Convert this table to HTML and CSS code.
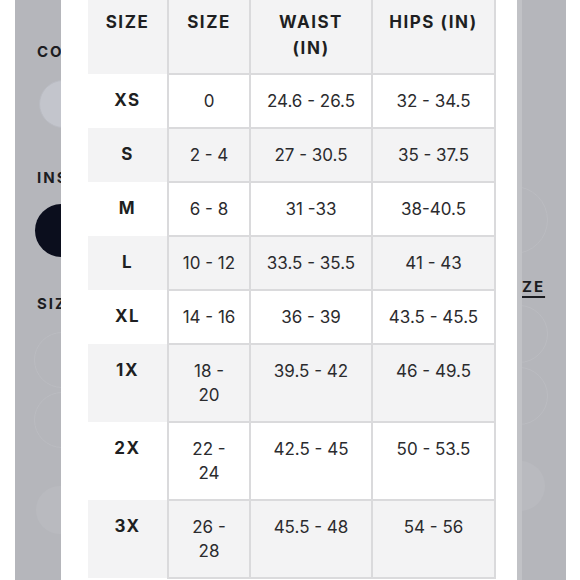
FILE: index.html
```html
<!DOCTYPE html>
<html lang="en">
<head>
<meta charset="utf-8">
<title>Size chart</title>
<link rel="stylesheet" href="styles.css">
</head>
<body>
<div class="frame">
  <div class="backdrop left">
    <div class="bg-label first">CO</div>
    <div class="swatch light"></div>
    <div class="bg-label after-swatch">INS</div>
    <div class="swatch dark"></div>
    <div class="bg-label after-dark">SIZ</div>
    <div class="ghost ring r1"></div>
    <div class="ghost ring r2"></div>
    <div class="ghost fill f1"></div>
  </div>

  <div class="modal">
    <table class="size-table">
      <colgroup>
        <col class="c1"><col class="c2"><col class="c3"><col class="c4">
      </colgroup>
      <thead>
        <tr>
          <th class="label">SIZE</th>
          <th>SIZE</th>
          <th>WAIST (IN)</th>
          <th>HIPS (IN)</th>
        </tr>
      </thead>
      <tbody>
        <tr><th class="label">XS</th><td>0</td><td>24.6 - 26.5</td><td>32 - 34.5</td></tr>
        <tr><th class="label">S</th><td>2 - 4</td><td>27 - 30.5</td><td>35 - 37.5</td></tr>
        <tr><th class="label">M</th><td>6 - 8</td><td>31 -33</td><td>38-40.5</td></tr>
        <tr><th class="label">L</th><td>10 - 12</td><td>33.5 - 35.5</td><td>41 - 43</td></tr>
        <tr><th class="label">XL</th><td>14 - 16</td><td>36 - 39</td><td>43.5 - 45.5</td></tr>
        <tr><th class="label">1X</th><td>18 -<br>20</td><td>39.5 - 42</td><td>46 - 49.5</td></tr>
        <tr><th class="label">2X</th><td>22 -<br>24</td><td>42.5 - 45</td><td>50 - 53.5</td></tr>
        <tr><th class="label">3X</th><td>26 -<br>28</td><td>45.5 - 48</td><td>54 - 56</td></tr>
      </tbody>
    </table>
  </div>

  <div class="backdrop right">
    <div class="ghost ring rr1"></div>
    <div class="bg-label link">ZE</div>
    <div class="ghost ring rr2"></div>
    <div class="ghost ring rr3"></div>
    <div class="ghost fill rf1"></div>
  </div>
</div>
</body>
</html>
```
FILE: styles.css
```css
* { box-sizing: border-box; }

html, body {
  margin: 0;
  padding: 0;
  background: #ffffff;
}

body {
  font-family: Inter, "Noto Sans", "Liberation Sans", sans-serif;
}

.frame {
  display: flex;
  width: 580px;
  height: 580px;
  padding: 0 14px 0 15px;
  overflow: hidden;
  background: #ffffff;
}

/* ---------- dimmed page behind the modal ---------- */
.backdrop {
  display: flex;
  flex-direction: column;
  height: 580px;
  overflow: hidden;
  background: #b5b6bb;
}

.backdrop.left {
  width: 46px;
  padding-left: 21px;
}

.backdrop.right {
  width: 49px;
  border-left: 5px solid #c1c2c6;
}

.bg-label {
  flex: none;
  font-size: 15px;
  line-height: 20px;
  font-weight: 700;
  letter-spacing: 2px;
  color: #1c1d22;
  white-space: nowrap;
  padding-left: 1px;
}

.bg-label.first { margin-top: 42px; }
.bg-label.after-swatch { margin-top: 40px; }
.bg-label.after-dark { margin-top: 37px; }

.swatch {
  flex: none;
  border-radius: 50%;
}

.swatch.light {
  width: 48px;
  height: 48px;
  margin-top: 18px;
  margin-left: 3px;
  background: #c3c5cc;
  border: 1px solid #b9bbc2;
}

.swatch.dark {
  width: 53px;
  height: 53px;
  margin-top: 16px;
  margin-left: -1px;
  background: #0b0e1d;
}

.ghost {
  flex: none;
  border-radius: 50%;
}

.ghost.ring {
  border: 1.5px solid #bbbcc1;
}

.ghost.fill {
  background: #b9babf;
}

.r1 { width: 56px; height: 56px; margin-top: 18px; margin-left: -2px; }
.r2 { width: 56px; height: 56px; margin-top: 4px; margin-left: -2px; }
.f1 { width: 48px; height: 48px; margin-top: 38px; margin-left: 0; }

.link {
  margin-top: 23px;
  text-decoration: underline;
  text-decoration-thickness: 2px;
  text-underline-offset: 4px;
  padding-left: 0;
}

.rr1 { width: 68px; height: 68px; margin-top: 186px; margin-left: -42px; }
.rr2 { width: 58px; height: 58px; margin-top: 8px; margin-left: -32px; }
.rr3 { width: 58px; height: 58px; margin-top: 4px; margin-left: -32px; }
.rf1 { width: 50px; height: 50px; margin-top: 36px; margin-left: -27px; }

/* ---------- modal ---------- */
.modal {
  width: 456px;
  height: 580px;
  background: #ffffff;
  padding-left: 27px;
  overflow: hidden;
}

.size-table {
  width: 407px;
  table-layout: fixed;
  border-collapse: collapse;
  color: #2b2b2e;
}

.c1 { width: 80px; }
.c2 { width: 82px; }
.c3 { width: 122px; }
.c4 { width: 123px; }

.size-table th,
.size-table td {
  padding: 14px 10px 14px;
  font-size: 17px;
  line-height: 24px;
  text-align: center;
  vertical-align: top;
  font-weight: 400;
}

.size-table td,
.size-table thead th {
  border: 2px solid #dadadc;
}

.size-table thead th {
  border-top: none;
  background: #f3f3f4;
  font-weight: 700;
  letter-spacing: 1.5px;
  line-height: 26px;
  padding: 9px 8px 12px;
  color: #1e1f22;
}

.size-table th.label {
  border-top: none;
  border-bottom: none;
  border-left: none;
  border-right: 2px solid #dadadc;
  font-weight: 700;
  letter-spacing: 1.5px;
  color: #1e1f22;
}

.size-table tbody tr:nth-child(even) th,
.size-table tbody tr:nth-child(even) td {
  background: #f3f3f4;
}

.size-table tbody tr:nth-child(odd) th,
.size-table tbody tr:nth-child(odd) td {
  background: #ffffff;
}
```
